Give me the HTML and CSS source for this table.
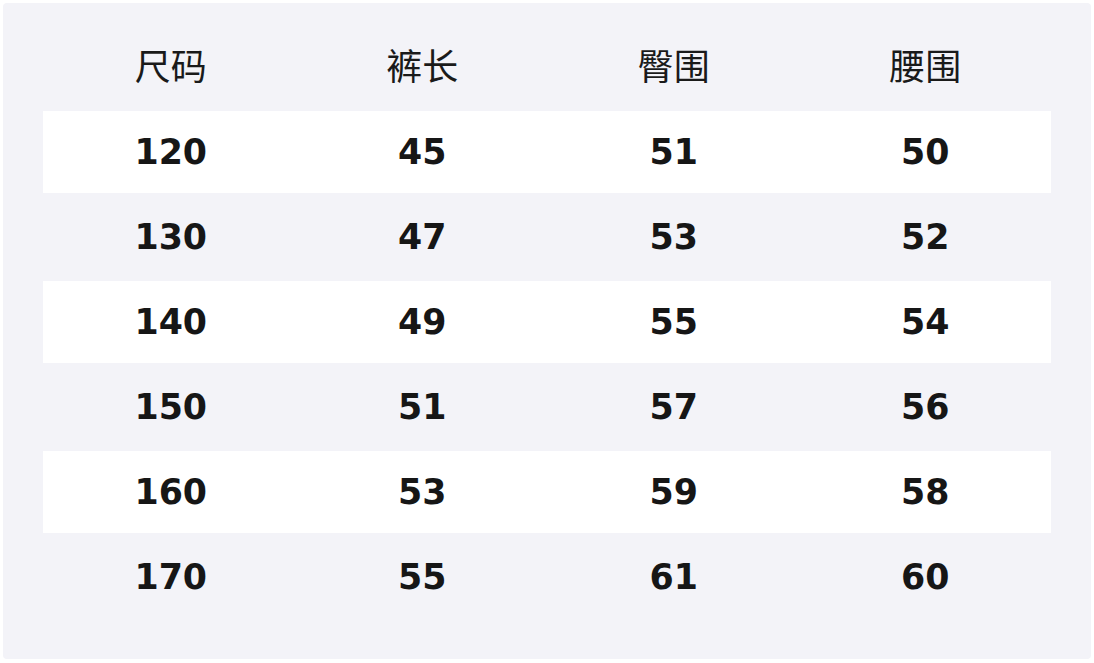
FILE: index.html
```html
<!DOCTYPE html>
<html lang="zh">
<head>
<meta charset="utf-8">
<link rel="stylesheet" href="styles.css">
</head>
<body>
<div class="panel">
  <div class="row head"><div>尺码</div><div>裤长</div><div>臀围</div><div>腰围</div></div>
  <div class="row band"><div>120</div><div>45</div><div>51</div><div>50</div></div>
  <div class="row"><div>130</div><div>47</div><div>53</div><div>52</div></div>
  <div class="row band"><div>140</div><div>49</div><div>55</div><div>54</div></div>
  <div class="row"><div>150</div><div>51</div><div>57</div><div>56</div></div>
  <div class="row band"><div>160</div><div>53</div><div>59</div><div>58</div></div>
  <div class="row"><div>170</div><div>55</div><div>61</div><div>60</div></div>
</div>
</body>
</html>
```
FILE: styles.css
```css
html, body {
  margin: 0;
  padding: 0;
  background: #ffffff;
}
body {
  padding: 3px;
}
.panel {
  width: 1088px;
  height: 656px;
  box-sizing: border-box;
  background: #f3f3f8;
  border-radius: 4px;
  padding: 23px 40px 41px 40px;
  display: flex;
  flex-direction: column;
  gap: 3px;
}
.row {
  height: 82px;
  box-sizing: border-box;
  display: grid;
  grid-template-columns: repeat(4, 1fr);
  align-items: center;
  justify-items: center;
  padding-left: 2px;
  font-family: "DejaVu Sans", "Noto Sans CJK SC", sans-serif;
  font-weight: bold;
  font-size: 34.8px;
  color: #161616;
}
.row.band {
  background: #ffffff;
}
.row.head {
  font-family: "Noto Sans CJK SC", sans-serif;
  font-weight: normal;
  font-size: 36px;
  color: #1a1a1a;
  padding-bottom: 6px;
}
```
